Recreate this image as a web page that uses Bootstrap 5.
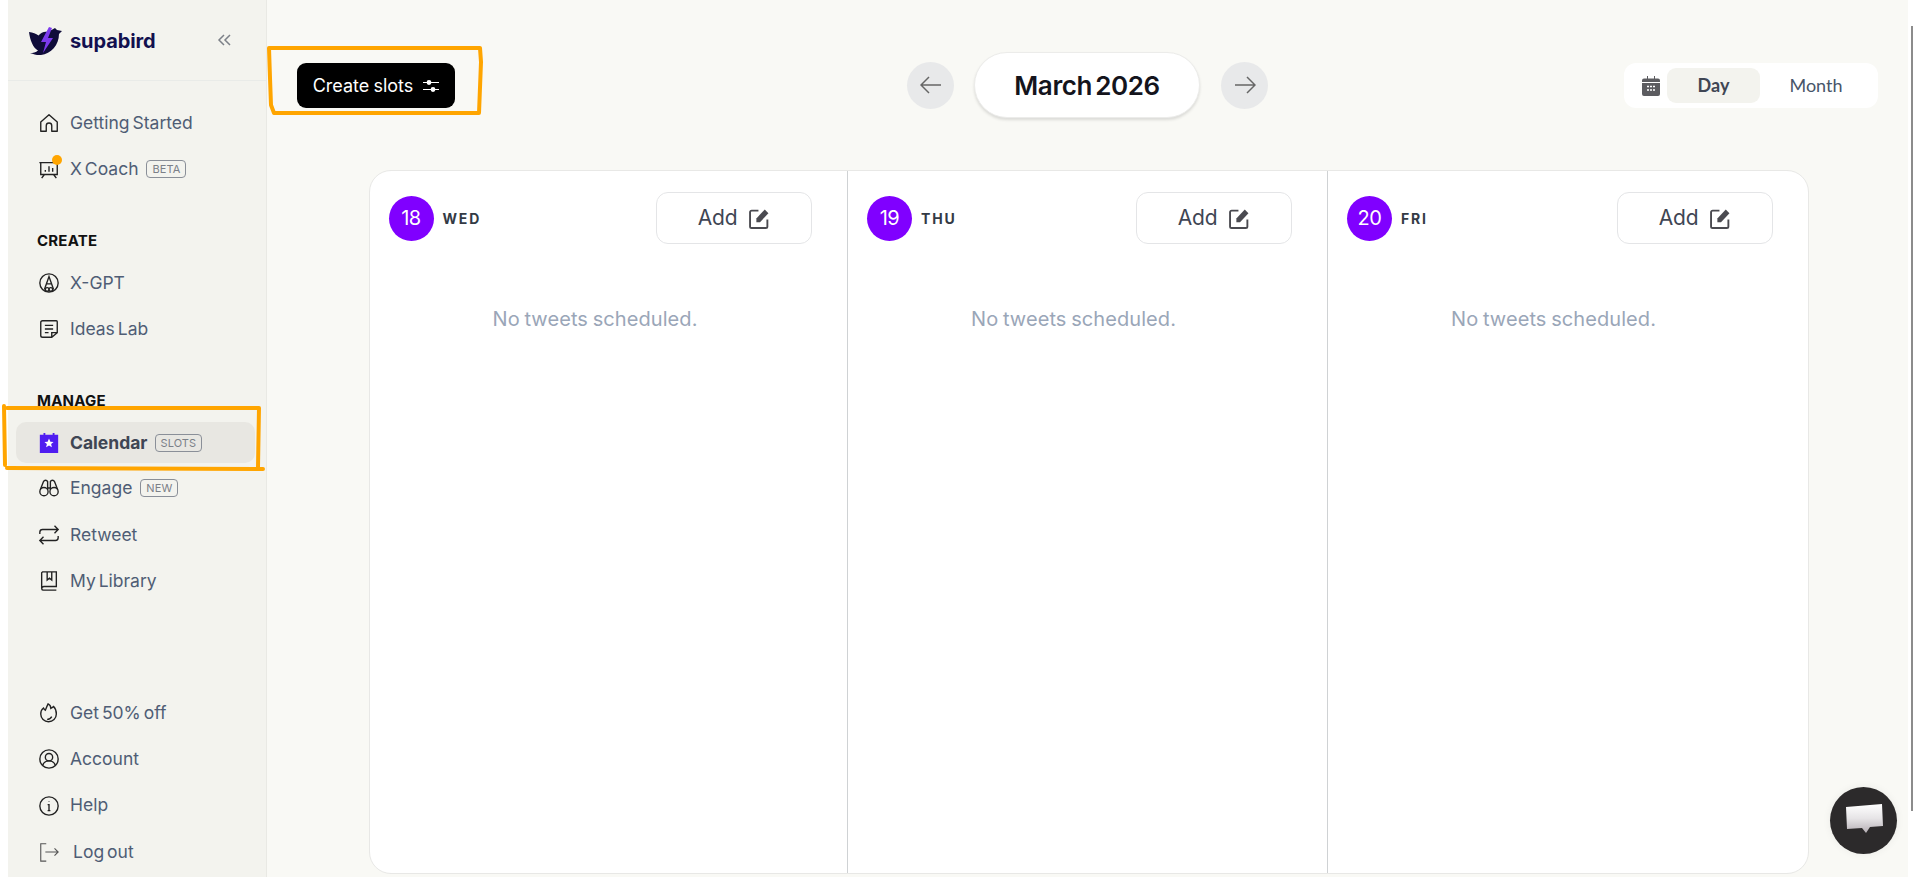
<!DOCTYPE html>
<html lang="en">
<head>
<meta charset="utf-8">
<title>Supabird calendar</title>
<link rel="stylesheet" href="https://cdn.jsdelivr.net/npm/bootstrap@5.3.0/dist/css/bootstrap.min.css">
<style>
html,body{height:100%;overflow:hidden}
body{background:#fff;font-family:Inter,"Liberation Sans",sans-serif;color:#475569;position:relative}
.shell{height:877px;padding-left:8px;width:1908px}
.side{width:259px;flex:none;background:#f3f3ee;border-right:1px solid #e9e9e4}
.brand{height:81px;border-bottom:1px solid #e9ebe8;padding:0 35px 0 20px}
.brand-logo{margin-right:6px;margin-top:4px}
.brand-name{font-size:20px;font-weight:700;color:#12104f;letter-spacing:-.1px;padding-top:2px}
.side-top{padding-top:19px}
.lnk{height:46.3px;padding-left:30px;gap:10px;font-size:17.5px;word-spacing:-2px;color:#4f5d75;text-decoration:none;white-space:nowrap}
.lnk svg{flex:none;width:22px;height:22px}
.sect{font-size:15px;font-weight:700;color:#111;letter-spacing:.2px;padding-left:29px;line-height:20px}
.tagbox{font-size:11px;line-height:16px;padding:0 5px;border:1px solid #8a8f98;border-radius:4px;color:#7b8088;letter-spacing:.1px;margin-left:-2px;word-spacing:0}
.lnk-on{height:41px;margin:0 0 2px 8px;padding-left:22px;width:239px;background:#e8e7e2;border-radius:10px;font-weight:700;color:#3f4654}
.lnk-on .tagbox{font-weight:400;margin-left:-3px}
.dotmark{position:absolute;width:10px;height:10px;border-radius:50%;background:#ffa500;top:-3px;right:-2px}
.work{background:#f9f9f5;min-width:0}
.toprow{height:170px;padding:63px 30px 0 30px;align-items:flex-start}
.make{height:45px;width:158px;background:#000;border:0;border-radius:9px;color:#fff;font-size:18px;word-spacing:-1px;gap:10px;padding:0}
.mid{width:361px;margin-left:452px;height:66px;margin-top:-11px}
.roundb{width:47px;height:47px;border-radius:50%;background:#e8e9ea;border:0;padding:0}
.pill{width:226px;height:66px;background:#fff;border-radius:33px;border:1px solid #ececea;box-shadow:0 2px 3px rgba(0,0,0,.12);font-size:26px;font-weight:600;color:#14141c;letter-spacing:-.4px;word-spacing:-3px;margin:0 21px 0 20px}
.toggle{margin-left:auto;width:254px;height:45px;background:#fff;border-radius:12px;padding:5px 0 5px 18px}
.day{width:93px;height:35px;background:#f3f3ee;border-radius:9px;font-family:Lato,sans-serif;font-weight:700;font-size:18px;color:#3f4654;margin-left:7px}
.mon{width:112px;font-family:Lato,sans-serif;font-size:18px;color:#475569}
.board{margin-left:101.500px;width:1440.500px;height:704px;background:#fff;border:1px solid #e8e8e6;border-radius:22px}
.daycol{width:480px;flex:none;border-right:1px solid #cfd2d4;padding:21px 0 0 19px}
.daycol:first-child{width:478.500px}
.daycol:last-child{border-right:0;flex:1}
.daynum{width:45px;height:45px;border-radius:50%;background:#8000ff;color:#fff;font-size:20px;letter-spacing:-.5px}
.dayname{font-size:14px;font-weight:700;letter-spacing:1.800px;color:#333a45;margin-left:9px}
.addb{width:156px;height:52px;margin-left:auto;margin-right:35px;background:#fff;border:1px solid #e4e5e7;border-radius:12px;font-size:21px;color:#3f4654;gap:12px;letter-spacing:-.2px}
.empty{width:413px;text-align:center;margin-top:60px;font-size:20px;letter-spacing:.08px;word-spacing:-1px;color:#9aa6b8;line-height:30px}
.hand{position:absolute;left:0;top:0;pointer-events:none}
.chat{position:absolute;left:1830px;top:787px;width:67px;height:67px;border-radius:50%;background:#2c2a2b;box-shadow:0 0 8px rgba(0,0,0,.06)}
.edgeline{position:absolute;left:1911px;top:26px;width:2px;height:785px;background:#8c8c8c}
</style>
</head>
<body>
<div class="shell d-flex">
  <aside class="side d-flex flex-column">
    <div class="brand d-flex align-items-center">
      <svg width="36" height="32" viewBox="0 0 36 32" class="brand-logo flex-shrink-0"><path d="M1 6c4 .5 7 1.500 9.500 3.500C13 6 17 5 20 6l7-4 2 2 5 1-3 3c0 11-8 20-18 21-4 .3-7-.5-11-2 3 0 6-.5 8-2.500C5 22 2 14 1 6z" fill="#0f0c3a"/><path d="M21 1 13 16h5l-3 11 10-15h-5l4-10z" fill="#7c3aed"/></svg>
      <span class="brand-name">supabird</span>
      <svg class="ms-auto" width="14" height="14" viewBox="0 0 14 14" fill="none" stroke="#7c8088" stroke-width="1.500"><path d="M7 2 2 7l5 5M13 2 8 7l5 5"/></svg>
    </div>
    <div class="side-top">
      <a class="lnk d-flex align-items-center" href="#"><svg viewBox="0 0 24 24" fill="none" stroke="#222" stroke-width="1.500"><path d="M3 11 12 3l9 8v10h-6v-6a3 3 0 0 0-6 0v6H3z" stroke-linejoin="round"/></svg>Getting Started</a>
      <a class="lnk d-flex align-items-center" href="#"><span class="position-relative d-flex"><svg viewBox="0 0 24 24" fill="none" stroke="#222" stroke-width="1.500"><path d="M3 5h18v13H3zM1.500 5h21M7 18l-3 4M17 18l3 4M8 15v-2M12 15V9M16 15v-4"/></svg><span class="dotmark"></span></span>X Coach <span class="tagbox">BETA</span></a>
    </div>
    <div class="sect" style="margin-top:38px">CREATE</div>
    <div class="mt-2">
      <a class="lnk d-flex align-items-center" href="#" style="margin-top:1px"><svg viewBox="0 0 24 24" fill="none" stroke="#222" stroke-width="1.500"><circle cx="12" cy="12" r="10"/><path d="M7 19 12 5l5 14M9 13h6"/><circle cx="10" cy="19" r="2"/><circle cx="14" cy="19" r="2"/></svg>X-GPT</a>
      <a class="lnk d-flex align-items-center" href="#"><svg viewBox="0 0 24 24" fill="none" stroke="#222" stroke-width="1.500"><path d="M5 3h15a1 1 0 0 1 1 1v12l-6 5H5a2 2 0 0 1-2-2V5a2 2 0 0 1 2-2zM15 21v-5h6M7.500 8h9M7.500 12h9M7.500 16h4"/></svg>Ideas Lab</a>
    </div>
    <div class="sect" style="margin-top:39px">MANAGE</div>
    <div style="margin-top:11px">
      <a class="lnk lnk-on d-flex align-items-center" href="#"><svg viewBox="0 0 24 24"><path d="M2 3h4V1h2v2h8V1h2v2h4v20H2z" fill="#4f1df0"/><path d="m12 7 1.500 3.500 3.500.3-2.700 2.300.9 3.500-3.200-1.900-3.200 1.900.9-3.500L7 10.800l3.500-.3z" fill="#fff"/></svg>Calendar <span class="tagbox">SLOTS</span></a>
      <a class="lnk d-flex align-items-center" href="#"><svg viewBox="0 0 24 24" fill="none" stroke="#222" stroke-width="1.500"><circle cx="6.500" cy="16" r="4.500"/><circle cx="17.500" cy="16" r="4.500"/><path d="M2.500 14 6 5a2.500 2.500 0 0 1 4.500 0v9M21.500 14 18 5a2.500 2.500 0 0 0-4.500 0v9M10.500 12h3"/></svg>Engage <span class="tagbox">NEW</span></a>
      <a class="lnk d-flex align-items-center" href="#"><svg viewBox="0 0 24 24" fill="none" stroke="#222" stroke-width="1.500"><path d="M2 11V9a3 3 0 0 1 3-3h17M18 2l4 4-4 4M22 13v2a3 3 0 0 1-3 3H2M6 22l-4-4 4-4"/></svg>Retweet</a>
      <a class="lnk d-flex align-items-center" href="#"><svg viewBox="0 0 24 24" fill="none" stroke="#222" stroke-width="1.500"><path d="M5 2h15v16H6.500A2.500 2.500 0 0 0 4 20.500V3zM4 20.500A2 2 0 0 0 6 22h14M10 2v9l2.500-2 2.500 2V2"/></svg>My Library</a>
    </div>
    <div class="mt-auto" style="padding-bottom:2px">
      <a class="lnk d-flex align-items-center" href="#"><svg viewBox="0 0 24 24" fill="none" stroke="#222" stroke-width="1.500"><path d="M11 2c2 1 3 3 3 5 1-.5 2-1 3-2 2 2 3 5 3 8a8.500 8.500 0 0 1-17 0c0-3 1-5 3-6.500.5 1 1 2 2 2.500 1-2.500 2-5 3-7z"/><path d="M10 19c2 0 4-1 5-3"/></svg>Get 50% off</a>
      <a class="lnk d-flex align-items-center" href="#"><svg viewBox="0 0 24 24" fill="none" stroke="#222" stroke-width="1.500"><circle cx="12" cy="12" r="10"/><circle cx="12" cy="10" r="4"/><path d="M5 19c1-3 4-5 7-5s6 2 7 5"/></svg>Account</a>
      <a class="lnk d-flex align-items-center" href="#"><svg viewBox="0 0 24 24" fill="none" stroke="#222" stroke-width="1.500"><circle cx="12" cy="12" r="10"/><path d="M10.500 10.500H12V17M10.500 17h3M12 7v.5"/></svg>Help</a>
      <a class="lnk d-flex align-items-center" href="#" style="gap:13px"><svg viewBox="0 0 24 24" fill="none" stroke="#555" stroke-width="1.200"><path d="M9 3H3v19h6M8 12h14M18 8l4 4-4 4"/></svg>Log out</a>
    </div>
  </aside>
  <main class="work flex-grow-1">
    <div class="toprow d-flex">
      <button class="make d-flex align-items-center justify-content-center" type="button">Create slots
        <svg width="16" height="14" viewBox="0 0 16 14" fill="none" stroke="#fff" stroke-width="1.200"><path d="M0 3.500h16M0 10.500h16"/><circle cx="6" cy="3.500" r="1.800" fill="#fff"/><circle cx="10" cy="10.500" r="1.800" fill="#fff"/></svg>
      </button>
      <div class="mid d-flex align-items-center">
        <button class="roundb d-flex align-items-center justify-content-center flex-shrink-0" type="button"><svg width="22" height="18" viewBox="0 0 22 18" fill="none" stroke="#666" stroke-width="1.500"><path d="M21 9H1M9 1 1 9l8 8"/></svg></button>
        <div class="pill d-flex align-items-center justify-content-center flex-shrink-0">March 2026</div>
        <button class="roundb d-flex align-items-center justify-content-center flex-shrink-0" type="button"><svg width="22" height="18" viewBox="0 0 22 18" fill="none" stroke="#666" stroke-width="1.500"><path d="M1 9h20M13 1l8 8-8 8"/></svg></button>
      </div>
      <div class="toggle d-flex align-items-center">
        <svg width="18" height="20" viewBox="0 0 18 20" class="flex-shrink-0"><path d="M2 2.500h3V0h1v2.500h6V0h1v2.500h3a2 2 0 0 1 2 2V18a2 2 0 0 1-2 2H2a2 2 0 0 1-2-2V4.500a2 2 0 0 1 2-2z" fill="#5c5c60"/><path d="M0 6.500h18" stroke="#fff"/><path d="M5 10.500h2M8 10.500h2M11 10.500h2M5 14h2M8 14h2M11 14h2" stroke="#fff" stroke-width="1.600"/></svg>
        <div class="day d-flex align-items-center justify-content-center">Day</div>
        <div class="mon text-center">Month</div>
      </div>
    </div>
    <div class="board d-flex overflow-hidden">
      <section class="daycol">
        <div class="d-flex align-items-center"><div class="daynum d-flex align-items-center justify-content-center flex-shrink-0">18</div><span class="dayname">WED</span>
          <button class="addb d-flex align-items-center justify-content-center" type="button">Add <svg width="21" height="21" viewBox="0 0 20 20"><path d="M9 2.500H2.500a1.500 1.500 0 0 0-1.500 1.500v13.500a1.500 1.500 0 0 0 1.500 1.500h13.500a1.500 1.500 0 0 0 1.500-1.500V11" fill="none" stroke="#4a4a50" stroke-width="1.800"/><path d="M7 10 15 1.500l3.500 3.500-8 8.500H7z" fill="#4a4a50"/></svg></button></div>
        <div class="empty">No tweets scheduled.</div>
      </section>
      <section class="daycol">
        <div class="d-flex align-items-center"><div class="daynum d-flex align-items-center justify-content-center flex-shrink-0">19</div><span class="dayname">THU</span>
          <button class="addb d-flex align-items-center justify-content-center" type="button">Add <svg width="21" height="21" viewBox="0 0 20 20"><path d="M9 2.500H2.500a1.500 1.500 0 0 0-1.500 1.500v13.500a1.500 1.500 0 0 0 1.500 1.500h13.500a1.500 1.500 0 0 0 1.500-1.500V11" fill="none" stroke="#4a4a50" stroke-width="1.800"/><path d="M7 10 15 1.500l3.500 3.500-8 8.500H7z" fill="#4a4a50"/></svg></button></div>
        <div class="empty">No tweets scheduled.</div>
      </section>
      <section class="daycol">
        <div class="d-flex align-items-center"><div class="daynum d-flex align-items-center justify-content-center flex-shrink-0">20</div><span class="dayname">FRI</span>
          <button class="addb d-flex align-items-center justify-content-center" type="button">Add <svg width="21" height="21" viewBox="0 0 20 20"><path d="M9 2.500H2.500a1.500 1.500 0 0 0-1.500 1.500v13.500a1.500 1.500 0 0 0 1.500 1.500h13.500a1.500 1.500 0 0 0 1.500-1.500V11" fill="none" stroke="#4a4a50" stroke-width="1.800"/><path d="M7 10 15 1.500l3.500 3.500-8 8.500H7z" fill="#4a4a50"/></svg></button></div>
        <div class="empty">No tweets scheduled.</div>
      </section>
    </div>
  </main>
</div>
<svg class="hand" width="1913" height="877" viewBox="0 0 1913 877" fill="none" stroke="#ffa500" stroke-width="4" stroke-linecap="round" stroke-linejoin="round">
  <path d="M269 48 480 48 481 62 479 113 274 113 271 105 270 78z"/>
  <path d="M4 406 5 465M7 408 259 408 258 467M7 468 263 469"/>
</svg>
<div class="edgeline"></div>
<div class="chat d-flex align-items-center justify-content-center">
  <svg width="40" height="36" viewBox="0 0 40 36"><defs><linearGradient id="bub" x1="0" y1="0" x2="0" y2="1"><stop offset="0" stop-color="#fff"/><stop offset=".5" stop-color="#e6e4e6"/><stop offset="1" stop-color="#b5aeb4"/></linearGradient></defs><path d="M2 4 38 1l1 22-13 1-4 6-4-5-15 1z" fill="url(#bub)"/></svg>
</div>
<script src="https://cdn.jsdelivr.net/npm/bootstrap@5.3.0/dist/js/bootstrap.bundle.min.js"></script>
</body>
</html>
